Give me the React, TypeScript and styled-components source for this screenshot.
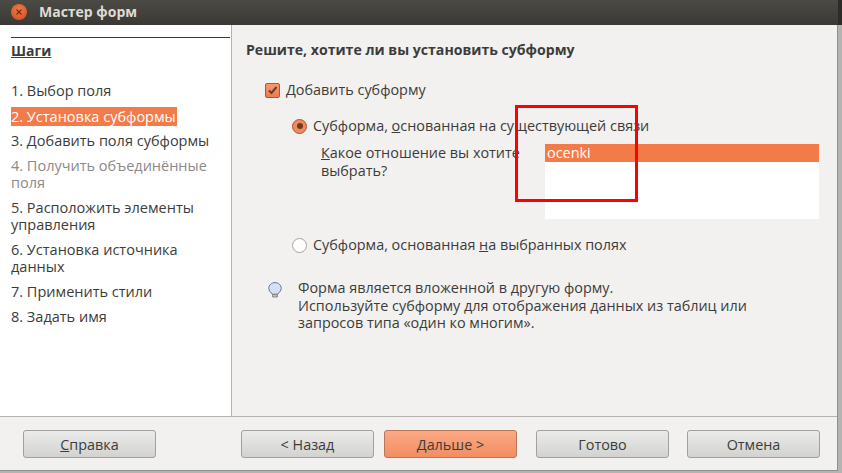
import styled, { createGlobalStyle } from "styled-components";

const Global = createGlobalStyle`
  html, body {
    margin: 0;
    padding: 0;
    background: #b4b4b2;
  }
`;

const Window = styled.div`
  width: 842px;
  height: 473px;
  display: flex;
  flex-direction: column;
  overflow: hidden;
  font-family: "Open Sans", "Noto Sans", "DejaVu Sans", sans-serif;
  font-size: 14.4px;
  color: #3c3c3c;
`;

const TitleBar = styled.div`
  height: 25px;
  flex: none;
  box-sizing: border-box;
  display: flex;
  align-items: center;
  padding: 0 0 2px 11px;
  gap: 12px;
  background: linear-gradient(#4b4a45, #3a3935);
  border-right: 4px solid #2d2c29;
`;

const CloseBtn = styled.div`
  width: 16px;
  height: 16px;
  border-radius: 50%;
  display: flex;
  align-items: center;
  justify-content: center;
  background: radial-gradient(circle at 50% 35%, #f07a4b, #d2491f);
`;

const Title = styled.span`
  font-size: 14px;
  font-weight: 700;
  color: #dfdbd2;
`;

const Dialog = styled.div`
  width: 837px;
  flex: none;
  height: 445px;
  display: flex;
  flex-direction: column;
  background: #f2f1ef;
  border-right: 1px solid #8f8f8d;
  border-bottom: 1px solid #8f8f8d;
`;

const Main = styled.div`
  height: 391px;
  flex: none;
  display: flex;
  border-bottom: 1px solid #b5b3af;
`;

const Sidebar = styled.div`
  width: 232px;
  flex: none;
  box-sizing: border-box;
  background: #fff;
  border-right: 1px solid #b5b3af;
  padding: 12px 0 0 11px;
  font-size: 14.5px;
`;

const SideTitle = styled.div`
  border-top: 1px solid #3c3c3c;
  margin-right: 1px;
  padding-top: 3px;
  font-size: 14px;
  font-weight: 700;
  text-decoration: underline;
  line-height: 20px;
  margin-bottom: 21px;
`;

const Step = styled.div<{ $active?: boolean; $disabled?: boolean }>`
  width: ${(p) => (p.$active ? "166px" : "200px")};
  line-height: ${(p) => (p.$active ? "19px" : "17px")};
  margin-bottom: ${(p) => (p.$active ? "6px" : "8px")};
  background: ${(p) => (p.$active ? "#f37b4a" : "transparent")};
  color: ${(p) => (p.$active ? "#fff" : p.$disabled ? "#8b8a88" : "#3c3c3c")};
  white-space: ${(p) => (p.$active ? "nowrap" : "normal")};
`;

const Content = styled.div`
  flex: 1;
  padding: 15px 0 0 14px;
  position: relative;
`;

const Heading = styled.div`
  font-size: 14.1px;
  font-weight: 700;
  line-height: 20px;
  margin-bottom: 20px;
`;

const Row = styled.div<{ $indent: number; $mb: number }>`
  display: flex;
  align-items: center;
  margin-left: ${(p) => p.$indent}px;
  margin-bottom: ${(p) => p.$mb}px;
  gap: 6px;
  line-height: 20px;
`;

const CheckBox = styled.div`
  width: 13px;
  height: 13px;
  border: 1px solid #b5532d;
  border-radius: 2px;
  background: linear-gradient(#f59a70, #ee7b4c);
  display: flex;
  align-items: center;
  justify-content: center;
`;

const Radio = styled.div<{ $on?: boolean }>`
  width: 13px;
  height: 13px;
  border-radius: 50%;
  border: 1px solid ${(p) => (p.$on ? "#b5532d" : "#a5a4a0")};
  background: ${(p) => (p.$on ? "#f08a5f" : "#fff")};
  display: flex;
  align-items: center;
  justify-content: center;
`;

const Dot = styled.div`
  width: 6px;
  height: 6px;
  border-radius: 50%;
  background: #6e3b24;
`;

const RelRow = styled.div`
  display: flex;
  margin-left: 75px;
  margin-top: 8px;
  margin-bottom: 16px;
`;

const RelLabel = styled.div`
  width: 224px;
  flex: none;
  line-height: 18px;
`;

const ListBox = styled.div`
  width: 274px;
  height: 75px;
  background: #fff;
`;

const ListItem = styled.div`
  height: 18px;
  line-height: 18px;
  padding-left: 2px;
  background: #f37b4a;
  color: #fff;
`;

const Hint = styled.div`
  display: flex;
  margin: 23px 0 0 22px;
  gap: 16px;
`;

const Bulb = styled.svg`
  flex: none;
  margin-top: 4px;
`;

const HintText = styled.div`
  line-height: 17.5px;
  padding-top: 1px;
`;

const RedBox = styled.div`
  position: absolute;
  left: 283px;
  top: 80px;
  width: 117px;
  height: 91px;
  border: 3px solid #f00;
`;

const Footer = styled.div`
  flex: 1;
  display: flex;
  align-items: flex-start;
  padding: 13px 0 0 23px;
`;

const Btn = styled.div<{ $primary?: boolean; $ml: number }>`
  box-sizing: border-box;
  width: 133px;
  height: 28px;
  margin-left: ${(p) => p.$ml}px;
  display: flex;
  align-items: center;
  justify-content: center;
  border-radius: 3px;
  border: 1px solid ${(p) => (p.$primary ? "#b9765a" : "#a0a09d")};
  background: ${(p) =>
    p.$primary ? "linear-gradient(#fbaa85, #f28d62)" : "linear-gradient(#ebebe9, #d2d2d0)"};
`;

const U = styled.span`
  text-decoration: underline;
`;

export default function App() {
  return (
    <>
      <Global />
      <Window>
        <TitleBar>
          <CloseBtn>
            <svg width="8" height="8" viewBox="0 0 8 8">
              <path d="M1.5 1.5 L6.5 6.5 M6.5 1.5 L1.5 6.5" stroke="#6d2c14" strokeWidth="1.1" />
            </svg>
          </CloseBtn>
          <Title>Мастер форм</Title>
        </TitleBar>
        <Dialog>
          <Main>
            <Sidebar>
              <SideTitle>Шаги</SideTitle>
              <Step>1. Выбор поля</Step>
              <Step $active>2. Установка субформы</Step>
              <Step>3. Добавить поля субформы</Step>
              <Step $disabled>4. Получить объединённые поля</Step>
              <Step>5. Расположить элементы управления</Step>
              <Step>6. Установка источника данных</Step>
              <Step>7. Применить стили</Step>
              <Step>8. Задать имя</Step>
            </Sidebar>
            <Content>
              <Heading>Решите, хотите ли вы установить субформу</Heading>
              <Row $indent={19} $mb={16}>
                <CheckBox>
                  <svg width="11" height="11" viewBox="0 0 11 11">
                    <path d="M2 5.5 L4.5 8 L9.5 2" fill="none" stroke="#6e3b24" strokeWidth="2" />
                  </svg>
                </CheckBox>
                <span>
                  <U>Д</U>обавить субформу
                </span>
              </Row>
              <Row $indent={46} $mb={6}>
                <Radio $on>
                  <Dot />
                </Radio>
                <span>
                  Субформа, <U>о</U>снованная на существующей связи
                </span>
              </Row>
              <RelRow>
                <RelLabel>
                  <U>К</U>акое отношение вы хотите выбрать?
                </RelLabel>
                <ListBox>
                  <ListItem>ocenki</ListItem>
                </ListBox>
              </RelRow>
              <Row $indent={46} $mb={0}>
                <Radio />
                <span>
                  Субформа, основанная <U>н</U>а выбранных полях
                </span>
              </Row>
              <Hint>
                <Bulb width="14" height="16" viewBox="0 0 14 16">
                  <path
                    d="M7 .6 C3.4 .6 .8 3.2 .8 6.3 C.8 8.6 2.2 9.8 3.4 11 L4.2 12.2 H9.8 L10.6 11 C11.8 9.8 13.2 8.6 13.2 6.3 C13.2 3.2 10.6 .6 7 .6 Z"
                    fill="#d5e1f2"
                    stroke="#5f769a"
                  />
                  <path d="M4.6 12.6 H9.4 V15 H4.6 Z" fill="#c9c6b8" stroke="#77766c" strokeWidth=".8" />
                </Bulb>
                <HintText>
                  Форма является вложенной в другую форму.
                  <br />
                  Используйте субформу для отображения данных из таблиц или
                  <br />
                  запросов типа «один ко многим».
                </HintText>
              </Hint>
              <RedBox />
            </Content>
          </Main>
          <Footer>
            <Btn $ml={0}>
              <span>
                <U>С</U>правка
              </span>
            </Btn>
            <Btn $ml={85}>&lt; Назад</Btn>
            <Btn $ml={10} $primary>
              Дальше &gt;
            </Btn>
            <Btn $ml={19}>Готово</Btn>
            <Btn $ml={18}>Отмена</Btn>
          </Footer>
        </Dialog>
      </Window>
    </>
  );
}
